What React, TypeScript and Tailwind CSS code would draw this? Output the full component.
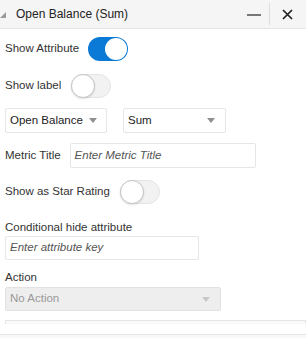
import React from 'react';

const font = { fontFamily: '"Helvetica Neue", "Liberation Sans", Arial, sans-serif' };

function Toggle({ on }: { on: boolean }) {
    // Interruptor estilo iOS
    return (
        <div
            className={`relative h-[24px] w-[40px] rounded-full ${
                on ? 'bg-[#0a7ad6]' : 'border border-[#e4e4e4] bg-[#f2f2f2]'
            }`}
        >
            <div
                className={`absolute h-[22px] w-[22px] rounded-full bg-white ${
                    on ? 'right-[1px] top-[1px]' : 'left-[-1px] top-[-1px] h-[24px] w-[24px] border border-[#c4c4c4] shadow-[0_1px_2px_rgba(0,0,0,0.12)]'
                }`}
            />
        </div>
    );
}

function Caret({ light }: { light?: boolean }) {
    return (
        <svg width="8" height="5" viewBox="0 0 8 5">
            <path d="M0 0 L8 0 L4 5 Z" fill={light ? '#c8c8c8' : '#8f8f8f'} />
        </svg>
    );
}

export default function App() {
    return (
        <div className="h-[338px] w-[306px] overflow-hidden bg-white text-[11.5px] text-[#333]" style={font}>
            {/* Cabeçalho */}
            <div className="flex h-[29px] items-center border-b border-[#e4e4e4] bg-[#f5f5f5]">
                <svg width="6" height="6" viewBox="0 0 6 6" className="mt-[1px]">
                    <path d="M0 6 L6 0 L6 6 Z" fill="#9a9a9a" />
                </svg>
                <span className="ml-[10px] text-[12px] text-[#222]">Open Balance (Sum)</span>
                <div className="ml-auto flex h-full items-center">
                    <div className="mr-[8px] mt-[2px] h-[1.5px] w-[14px] bg-[#777]" />
                    <div className="h-[22px] w-px bg-[#dedede]" />
                    <svg width="11" height="11" viewBox="0 0 11 11" className="ml-[12px] mr-[13px]">
                        <path d="M1 1 L10 10 M10 1 L1 10" stroke="#222" strokeWidth="1.7" />
                    </svg>
                </div>
            </div>

            <div className="px-[5px]">
                <div className="mt-[8px] flex items-center gap-[9px]">
                    <span>Show Attribute</span>
                    <Toggle on />
                </div>
                <div className="mt-[13px] flex items-center gap-[10px]">
                    <span>Show label</span>
                    <Toggle on={false} />
                </div>

                <div className="mt-[10px] flex gap-[16px]">
                    <div className="flex h-[25px] w-[102px] items-center justify-between rounded-[2px] border border-[#e6e6e6] pl-[4px] pr-[9px]">
                        <span className="text-[#222]">Open Balance</span>
                        <Caret />
                    </div>
                    <div className="flex h-[25px] w-[103px] items-center justify-between rounded-[2px] border border-[#e6e6e6] pl-[4px] pr-[10px]">
                        <span className="text-[#222]">Sum</span>
                        <Caret />
                    </div>
                </div>

                <div className="mt-[10px] flex items-center gap-[9px]">
                    <span>Metric Title</span>
                    <div className="flex h-[25px] w-[186px] items-center rounded-[2px] border border-[#e6e6e6] pl-[4px] italic text-[#555]">
                        Enter Metric Title
                    </div>
                </div>

                <div className="mt-[12px] flex items-center gap-[10px]">
                    <span>Show as Star Rating</span>
                    <Toggle on={false} />
                </div>

                <div className="mt-[15px] leading-[16px]">Conditional hide attribute</div>
                <div className="mt-[1px] flex h-[24px] w-[194px] items-center rounded-[2px] border border-[#e6e6e6] pl-[4px] italic text-[#555]">
                    Enter attribute key
                </div>

                <div className="mt-[9px] leading-[16px]">Action</div>
                <div className="mt-[2px] flex h-[24px] w-[216px] items-center justify-between rounded-[2px] border border-[#e2e2e2] bg-[#eeeeee] pl-[4px] pr-[10px] text-[#999]">
                    <span>No Action</span>
                    <Caret light />
                </div>

                <div className="mr-[-5px] mt-[9px] h-[4px] border-x border-t border-[#e6e6e6] bg-[#fafafa]" />
            </div>
            <div className="mt-[10px] h-[4px] border-t border-[#e6e6e6] bg-[#f8f8f8]" />
        </div>
    );
}
